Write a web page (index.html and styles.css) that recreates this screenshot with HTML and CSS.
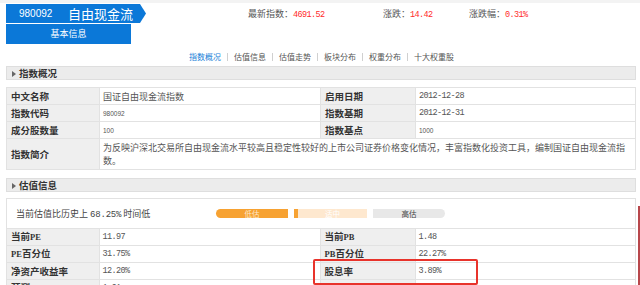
FILE: index.html
```html
<!DOCTYPE html>
<html lang="zh-CN">
<head>
    <meta charset="UTF-8">
    <meta name="viewport" content="width=device-width, initial-scale=1.0">
    <title>自由现金流 - 指数概况</title>
    <link rel="stylesheet" href="styles.css">
</head>
<body>
    <div class="topline"></div>
    <div class="page">
        <div class="head">
            <div class="tag"><span class="code">980092</span><span class="name">自由现金流</span></div>
            <div class="stats">
                <div class="stat s1">最新指数：<span class="red num">4691.52</span></div>
                <div class="stat s2">涨跌：<span class="red num">14.42</span></div>
                <div class="stat s3">涨跌幅：<span class="red num">0.31%</span></div>
            </div>
        </div>
        <div class="basic">基本信息</div>
        <ul class="tabs">
            <li class="on">指数概况</li>
            <li>估值信息</li>
            <li>估值走势</li>
            <li>板块分布</li>
            <li>权重分布</li>
            <li>十大权重股</li>
        </ul>

        <div class="bar"><span class="arrow"></span>指数概况</div>
        <table class="info">
            <tr>
                <th class="c1">中文名称</th>
                <td class="c2">国证自由现金流指数</td>
                <th class="c3">启用日期</th>
                <td class="num">2012-12-28</td>
            </tr>
            <tr>
                <th>指数代码</th>
                <td class="small">980092</td>
                <th>指数基期</th>
                <td class="num">2012-12-31</td>
            </tr>
            <tr>
                <th>成分股数量</th>
                <td class="small">100</td>
                <th>指数基点</th>
                <td class="small">1000</td>
            </tr>
            <tr class="tall">
                <th>指数简介</th>
                <td colspan="3" class="intro">为反映沪深北交易所自由现金流水平较高且稳定性较好的上市公司证券价格变化情况，丰富指数化投资工具，编制国证自由现金流指<br>数。</td>
            </tr>
        </table>

        <div class="bar bar2"><span class="arrow"></span>估值信息</div>
        <div class="val">
            <div class="val-top">
                <span class="val-text">当前估值比历史上 <span class="num">68.25%</span> 时间低</span>
                <div class="meter">
                    <span class="seg low">低估</span>
                    <span class="pin"></span>
                    <span class="seg mid">适中</span>
                    <span class="seg high">高估</span>
                </div>
            </div>
            <table class="info">
                <tr>
                    <th class="c1">当前<b class="lat">PE</b></th>
                    <td class="c2 num">11.97</td>
                    <th class="c3">当前<b class="lat">PB</b></th>
                    <td class="num">1.48</td>
                </tr>
                <tr>
                    <th><b class="lat">PE</b>百分位</th>
                    <td class="num">31.75%</td>
                    <th><b class="lat">PB</b>百分位</th>
                    <td class="num">22.27%</td>
                </tr>
                <tr>
                    <th>净资产收益率</th>
                    <td class="num">12.20%</td>
                    <th>股息率</th>
                    <td class="num">3.89%</td>
                </tr>
                <tr>
                    <th>预测<b class="lat">PE</b></th>
                    <td class="num">1.61</td>
                    <th></th>
                    <td></td>
                </tr>
            </table>
            <div class="mark"></div>
        </div>
    </div>
    <div class="edge"></div>
</body>
</html>
```

FILE: styles.css
```css
* {
    margin: 0;
    padding: 0;
    box-sizing: border-box;
}

body {
    position: relative;
    width: 640px;
    height: 285px;
    overflow: hidden;
    background: #fff;
    color: #333;
    font-family: "Noto Sans CJK SC", sans-serif;
    font-size: 9px;
}

ul {
    list-style: none;
}

.topline {
    height: 3px;
    background: #f3f3f3;
}

.page {
    width: 630px;
    margin: 1px 0 0 6px;
}

.num {
    font-family: "Liberation Mono", monospace;
    font-size: 8.5px;
    letter-spacing: -0.6px;
}

.small {
    font-family: "Liberation Sans", sans-serif;
    font-size: 6.5px;
    color: #555;
}

.red {
    color: #ff2a2a;
}

/* header */
.head {
    display: flex;
    align-items: center;
    height: 19px;
}

.tag {
    display: flex;
    align-items: center;
    width: 140px;
    height: 19px;
    padding-left: 13px;
    background: #0b78d8;
    color: #fff;
    clip-path: polygon(0 0, 134px 0, 140px 50%, 134px 100%, 0 100%);
}

.code {
    width: 49px;
    font-family: "Liberation Sans", sans-serif;
    font-size: 10px;
}

.name {
    font-size: 13px;
    line-height: 19px;
}

.stats {
    display: flex;
    margin-left: 102px;
    color: #555;
}

.s1 {
    width: 135px;
}

.s2 {
    width: 86px;
}

.basic {
    width: 125px;
    height: 20px;
    margin-top: 1px;
    background: #0b78d8;
    color: #fff;
    line-height: 20px;
    text-align: center;
}

.tabs {
    display: flex;
    align-items: center;
    height: 22px;
    padding: 2px 0 0 183px;
    font-size: 8px;
    color: #555;
}

.tabs li + li::before {
    content: "";
    display: inline-block;
    width: 1px;
    height: 8px;
    margin: 0 6px;
    background: #d0d0d0;
    vertical-align: -1px;
}

.tabs .on {
    color: #1a7fd8;
}

/* section bars */
.bar {
    height: 14px;
    padding-left: 5px;
    border: 1px solid #dedede;
    background: #ececec;
    font-size: 9.5px;
    font-weight: bold;
    line-height: 12px;
}

.bar2 {
    margin-top: 8px;
}

.arrow {
    display: inline-block;
    margin-right: 3px;
    border-top: 3px solid transparent;
    border-bottom: 3px solid transparent;
    border-left: 4px solid #666;
    vertical-align: 0;
}

/* tables */
.info {
    width: 630px;
    margin-top: 7px;
    border-collapse: collapse;
    table-layout: fixed;
}

.info th,
.info td {
    height: 17px;
    padding: 0 3px;
    border: 1px solid #e2e2e2;
    line-height: 15px;
    text-align: left;
    vertical-align: middle;
    white-space: nowrap;
}

.info th {
    padding-left: 4px;
    background: #efefef;
    font-size: 9.5px;
    color: #333;
}

.info td {
    color: #555;
}

.info .c1 {
    width: 93px;
}

.info .c2 {
    width: 221px;
}

.info .c3 {
    width: 95px;
}

.info .tall th,
.info .tall td {
    height: 31px;
}

.info .intro {
    line-height: 13px;
}

.lat {
    font-family: "Liberation Serif", serif;
    font-size: 8.5px;
}

/* valuation box */
.val {
    position: relative;
    margin-top: 6px;
    border: 1px solid #e2e2e2;
}

.val-top {
    display: flex;
    align-items: center;
    height: 29px;
    padding-left: 9px;
    color: #444;
}

.val-text {
    width: 200px;
}

.val-text .num {
    font-size: 9px;
    letter-spacing: -0.2px;
}

.meter {
    display: flex;
    align-items: center;
    height: 9px;
}

.seg {
    height: 9px;
    font-size: 7.5px;
    line-height: 9px;
    text-align: center;
}

.low {
    width: 72px;
    border-radius: 5px 0 0 5px;
    background: #f7a232;
    color: #fde8cc;
}

.pin {
    width: 4px;
    height: 9px;
    margin-left: 6px;
    background: #f7a232;
}

.mid {
    width: 69px;
    background: #fee8cf;
    color: #fff;
}

.high {
    width: 72px;
    margin-left: 6px;
    border-radius: 0 5px 5px 0;
    background: #e8e8e8;
    color: #444;
}

.val .info {
    width: 100%;
    margin-top: 0;
}

.val .info th:first-child {
    border-left: 0;
}

.val .info td:last-child {
    border-right: 0;
}

.val .info .c1 {
    width: 92px;
}

/* annotations drawn over the page */
.mark {
    position: absolute;
    left: 306px;
    top: 60px;
    width: 165px;
    height: 26px;
    border: 2px solid #e8332b;
    border-radius: 2px;
}

.edge {
    position: absolute;
    left: 638px;
    top: 206px;
    width: 2px;
    height: 79px;
    background: #b8474b;
}
```
